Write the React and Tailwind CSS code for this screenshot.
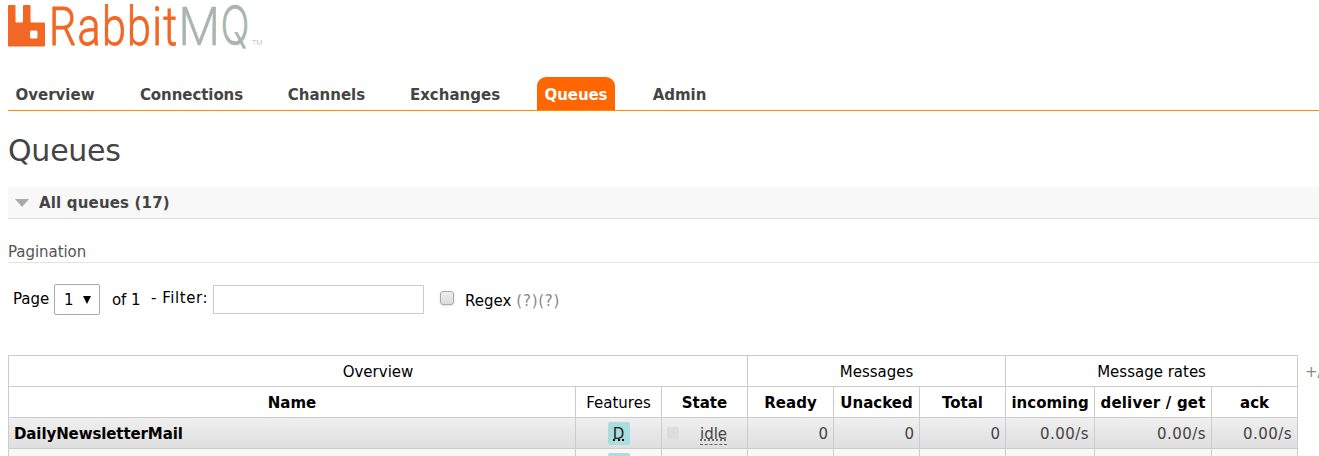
const tabs = [
  { label: "Overview", box: "ml-0 w-[94px]" },
  { label: "Connections", box: "ml-[30px] w-[119px] tracking-[-0.07px]" },
  { label: "Channels", box: "ml-[29px] w-[93px]" },
  { label: "Exchanges", box: "ml-[29px] w-[106px]" },
  { label: "Queues", box: "ml-[29px] w-[78px] tracking-[-0.1px]", active: true },
  { label: "Admin", box: "ml-[30px] w-[69px] tracking-[-0.05px]" },
];

const counts = ["0", "0", "0"];
const rates = ["0.00/s", "0.00/s", "0.00/s"];
const cell = "h-[31px] border-r border-b border-[#ccc] p-0 align-middle whitespace-nowrap";
const textCell = `${cell} pt-[2px]`;

function Logo() {
  return (
    <svg width="272" height="60" viewBox="0 0 272 60" className="block" aria-label="RabbitMQ">
      <path
        fill="#f26724"
        fillRule="evenodd"
        d="M9 5H14.5Q15.5 5 15.5 6V21.5Q15.5 22.5 16.5 22.5H22Q23 22.5 23 21.5V6Q23 5 24 5H29.5Q30.5 5 30.5 6V21.5Q30.5 22.5 31.500 22.5H44Q45 22.5 45 23.500V45.500Q45 46.500 44 46.500H9Q8 46.500 8 45.500V6Q8 5 9 5ZM31.500 30.500Q30 30.500 30 32V37Q30 38.500 31.500 38.500H36Q37.500 38.500 37.500 37V32Q37.500 30.500 36 30.500Z"
      />
      <g fontFamily="Roboto, sans-serif" fontWeight="300" fontSize="54.500">
        <text transform="translate(49 45.300) scale(0.79 1)" letterSpacing="1.6" fill="#f26724" stroke="#f26724" strokeWidth="0.9">Rabbit</text>
        <text transform="translate(178.500 45.300) scale(0.88 1)" fill="#a9b5b0" stroke="#a9b5b0" strokeWidth="0.6">M</text>
        <text transform="translate(220.500 44.800) scale(0.7 1)" fontFamily="Inter, sans-serif" fill="#a9b5b0" stroke="#a9b5b0" strokeWidth="0.4">Q</text>
        <text x="252" y="44.500" fontSize="7" fill="#a9b5b0">TM</text>
      </g>
    </svg>
  );
}

function QueueRow({ name }) {
  return (
    <tr className="bg-linear-to-b from-[#f0f0f0] to-[#dedede] text-[#444]">
      <td className={`${textCell} pl-[5px] text-left font-bold tracking-[-0.1px] text-black`}>{name}</td>
      <td className={cell}>
        <span className="mx-auto flex h-[23px] w-[22px] items-start justify-center rounded-[2px] bg-[#aadddd] pt-[3px] text-[#222]">
          <span className="h-[16px] border-b-2 border-dotted border-black">D</span>
        </span>
      </td>
      <td className={cell}>
        <div className="flex items-center pl-[5px]">
          <span className="size-3 bg-[#ddd]" />
          <span className="mt-[3px] ml-[21px] h-5 border-b border-dashed border-[#666] leading-[18px] underline decoration-dotted underline-offset-1">idle</span>
        </div>
      </td>
      {counts.map((v, i) => (
        <td key={i} className={`${textCell} pr-[5px] text-right`}>{v}</td>
      ))}
      {rates.map((v, i) => (
        <td key={i} className={`${textCell} pr-[5px] text-right tracking-[0.45px]`}>{v}</td>
      ))}
    </tr>
  );
}

export default function App() {
  return (
    <div className="h-[456px] w-[1319px] overflow-hidden bg-white font-['DejaVu_Sans',sans-serif] text-[15px] leading-[18px] text-black">
      <header className="h-[77px]"><Logo /></header>

      <nav className="ml-2 flex h-[34px] border-b border-[#ff8c00] font-bold text-[#444]">
        {tabs.map((t) => (
          <a
            key={t.label}
            className={`flex h-[33px] shrink-0 items-center justify-center pt-[2px] ${t.box} ${t.active ? "rounded-t-[9px] bg-[#ff6600] text-white" : ""}`}
          >
            {t.label}
          </a>
        ))}
      </nav>

      <h1 className="ml-2 h-[76px] pt-[21px] text-[30px] leading-[38px] tracking-[-0.25px] text-[#444]">Queues</h1>

      <h2 className="ml-2 flex h-8 items-center border-b border-[#ddd] bg-[#f8f8f8] font-bold text-[#444]">
        <svg width="14" height="8" viewBox="0 0 14 8" className="ml-[7px]">
          <path d="M0 0H14L7 8Z" fill="#aaa" />
        </svg>
        <span className="ml-[10px] tracking-[0.17px]">All queues (17)</span>
      </h2>

      <h3 className="ml-2 flex h-11 items-end border-b border-[#e4e4e4] pb-[1px] tracking-[-0.05px] text-[#555]">Pagination</h3>

      <form className="flex h-[92px] items-start pt-[21px] pl-[13px]">
        <label className="w-[41px] pt-[6px]">Page</label>
        <div className="flex h-[31px] w-[46px] items-center rounded-[2px] border border-[#aaa] pl-[9px]">
          <span>1</span>
          <svg width="8" height="8" viewBox="0 0 8 8" className="ml-[9px]">
            <path d="M0 0H8L4 8Z" fill="#000" />
          </svg>
        </div>
        <span className="ml-3 w-[39px] pt-[7px] tracking-[-0.1px]">of 1</span>
        <span className="w-[62px] pt-[5px] tracking-[0.55px] whitespace-nowrap">- Filter:</span>
        <span className="mt-px h-[29px] w-[211px] border border-[#ccc]" />
        <span className="mt-[7px] ml-4 size-[14px] rounded-[3px] border border-[#aaa] bg-linear-to-b from-[#eee] to-[#dcdcdc] shadow-sm" />
        <span className="ml-[11px] pt-2">Regex</span>
        <span className="ml-[5px] pt-2 tracking-[0.75px] text-[#888]">(?)(?)</span>
      </form>

      <div className="flex pl-2">
        <table className="w-[1290px] shrink-0 table-fixed border-separate border-spacing-0 border-t border-l border-[#ccc] text-center">
          <colgroup>
            <col className="w-[567px]" />
            <col className="w-[86px]" />
            <col className="w-[86px]" />
            <col className="w-[86px]" />
            <col className="w-[86px]" />
            <col className="w-[86px]" />
            <col className="w-[89px]" />
            <col className="w-[117px]" />
            <col className="w-[86px]" />
          </colgroup>
          <thead>
            <tr>
              <th colSpan={3} className={`${textCell} font-normal`}>Overview</th>
              <th colSpan={3} className={`${textCell} font-normal`}>Messages</th>
              <th colSpan={3} className={`${textCell} font-normal`}>Message rates</th>
            </tr>
            <tr>
              <th className={textCell}>Name</th>
              <th className={`${textCell} font-normal`}>Features</th>
              <th className={textCell}>State</th>
              <th className={textCell}>Ready</th>
              <th className={textCell}>Unacked</th>
              <th className={textCell}>Total</th>
              <th className={textCell}>incoming</th>
              <th className={`${textCell} tracking-[0.2px]`}>deliver / get</th>
              <th className={textCell}>ack</th>
            </tr>
          </thead>
          <tbody>
            <QueueRow name="DailyNewsletterMail" />
            <tr className="bg-[#f8f8f8]">
              <td className={cell} />
              <td className={cell}>
                <span className="mx-auto flex h-[23px] w-[22px] items-center justify-center rounded-[2px] bg-[#aadddd]" />
              </td>
              <td className={cell} />
              <td className={cell} />
              <td className={cell} />
              <td className={cell} />
              <td className={cell} />
              <td className={cell} />
              <td className={cell} />
            </tr>
          </tbody>
        </table>
        <span className="ml-[7px] pt-2 whitespace-nowrap text-[#888]">+/-</span>
      </div>
    </div>
  );
}
